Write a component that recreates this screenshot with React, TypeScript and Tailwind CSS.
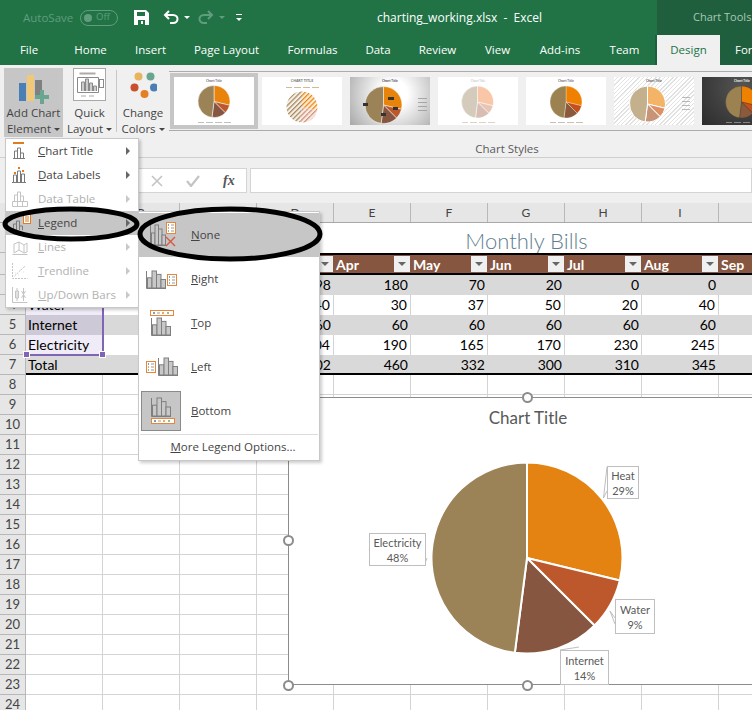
import type { ReactNode } from "react";

const uiFont = "font-['Open_Sans','Noto_Sans',sans-serif]";
const cellFont = "font-['Lato','Liberation_Sans',sans-serif]";

const tabs = [
  { name: "File", cls: "w-[58px]" },
  { name: "Home", cls: "w-[65px]" },
  { name: "Insert", cls: "w-[55px]" },
  { name: "Page Layout", cls: "w-[97px]" },
  { name: "Formulas", cls: "w-[75px]" },
  { name: "Data", cls: "w-[56px]" },
  { name: "Review", cls: "w-[63px]" },
  { name: "View", cls: "w-[57px]" },
  { name: "Add-ins", cls: "w-[68px]" },
  { name: "Team", cls: "w-[61px]" },
];

const columns = ["A", "B", "C", "D", "E", "F", "G", "H", "I", "J"];

const tableRows = [
  { n: 3, label: "Heat", vals: ["98", "180", "70", "20", "0", "0"], shaded: true },
  { n: 4, label: "Water", vals: ["40", "30", "37", "50", "20", "40"], shaded: false },
  { n: 5, label: "Internet", vals: ["60", "60", "60", "60", "60", "60"], shaded: true },
  { n: 6, label: "Electricity", vals: ["304", "190", "165", "170", "230", "245"], shaded: false },
  { n: 7, label: "Total", vals: ["502", "460", "332", "300", "310", "345"], shaded: true },
];

const months = ["", "Apr", "May", "Jun", "Jul", "Aug", "Sep"];
const emptyRows = [8, 9, 10, 11, 12, 13, 14, 15, 16, 17, 18, 19, 20, 21, 22, 23, 24];

// slice boundaries in degrees, clockwise from the top
const pieAngles = [0, 103.6, 135, 187.3, 360];

function slicePath(cx: number, cy: number, r: number, from: number, to: number) {
  const a = ((from - 90) * Math.PI) / 180;
  const b = ((to - 90) * Math.PI) / 180;
  const large = to - from > 180 ? 1 : 0;
  const x1 = cx + r * Math.cos(a);
  const y1 = cy + r * Math.sin(a);
  const x2 = cx + r * Math.cos(b);
  const y2 = cy + r * Math.sin(b);
  return `M${cx} ${cy}L${x1.toFixed(2)} ${y1.toFixed(2)}A${r} ${r} 0 ${large} 1 ${x2.toFixed(2)} ${y2.toFixed(2)}Z`;
}

function Pie(props: { cx: number; cy: number; r: number; colors: string[]; gap?: number; stroke?: string }) {
  const { cx, cy, r, colors, gap = 1, stroke = "#ffffff" } = props;
  return (
    <>
      {colors.map((c, i) => (
        <path
          key={i}
          d={slicePath(cx, cy, r, pieAngles[i], pieAngles[i + 1])}
          fill={c}
          stroke={stroke}
          strokeWidth={gap}
        />
      ))}
    </>
  );
}

function Thumb({ cls, children }: { cls: string; children: ReactNode }) {
  return (
    <svg viewBox="0 0 80 48" className={`h-[48px] w-[80px] flex-none ${cls}`}>
      {children}
    </svg>
  );
}

function ThumbLegend({ y = 45, fill = "#b0b0b0" }: { y?: number; fill?: string }) {
  return (
    <g fill={fill}>
      <rect x="24" y={y} width="6" height="0.8" />
      <rect x="32" y={y} width="7" height="0.8" />
      <rect x="41" y={y} width="7" height="0.8" />
      <rect x="50" y={y} width="7" height="0.8" />
    </g>
  );
}

function Gallery() {
  const base = ["#e8830c", "#bd582c", "#865640", "#9b8357"];
  return (
    <div className="flex h-[60px] w-[676px] items-center border-y border-[#ababab] pl-[1px]">
      <div className="flex-none bg-[#c6c6c6] p-[4px]">
        <Thumb cls="bg-white">
          <text x="40" y="5" fontSize="3" fontWeight="bold" fill="#777" textAnchor="middle">Chart Title</text>
          <Pie cx={40} cy={24.5} r={16} colors={base} gap={0.5} />
          <ThumbLegend />
        </Thumb>
      </div>
      <Thumb cls="ml-[4px] bg-white">
        <defs>
          <pattern id="hatch" width="3.4" height="3.4" patternUnits="userSpaceOnUse" patternTransform="rotate(-45)">
            <rect width="3.4" height="3.4" fill="#f6efe4" />
            <rect width="3.4" height="1.2" fill="#a2825a" />
          </pattern>
          <pattern id="hatch2" width="3.4" height="3.4" patternUnits="userSpaceOnUse" patternTransform="rotate(-45)">
            <rect width="3.4" height="3.4" fill="#fcecd8" />
            <rect width="3.4" height="1.2" fill="#e8830c" />
          </pattern>
          <pattern id="hatch3" width="3.4" height="3.4" patternUnits="userSpaceOnUse" patternTransform="rotate(-45)">
            <rect width="3.4" height="3.4" fill="#f8ebe4" />
            <rect width="3.4" height="1.2" fill="#d08a70" />
          </pattern>
        </defs>
        <text x="40" y="5" fontSize="3.6" fontWeight="bold" fill="#777" textAnchor="middle">CHART TITLE</text>
        <ThumbLegend y={10} fill="#c9a880" />
        <Pie cx={40} cy={30} r={15.5} colors={["url(#hatch2)", "url(#hatch3)", "url(#hatch3)", "url(#hatch)"]} gap={0} />
      </Thumb>
      <Thumb cls="ml-[8px] bg-[radial-gradient(circle_at_55%_35%,#ffffff_25%,#a8a8a8_100%)]">
        <text x="40" y="5" fontSize="3" fontWeight="bold" fill="#555" textAnchor="middle">Chart Title</text>
        <Pie cx={33.5} cy={28} r={18.5} colors={base} gap={0.5} />
        <g fill="#333">
          <rect x="38" y="20" width="6" height="3" />
          <rect x="43" y="30" width="5" height="3" />
          <rect x="31" y="36" width="5" height="3" />
          <rect x="13" y="26" width="5" height="3" />
        </g>
        <g fill="#999">
          <rect x="68" y="21" width="9" height="0.8" />
          <rect x="68" y="25" width="9" height="0.8" />
          <rect x="68" y="29" width="9" height="0.8" />
          <rect x="68" y="33" width="9" height="0.8" />
        </g>
      </Thumb>
      <Thumb cls="ml-[8px] bg-white">
        <text x="40" y="5" fontSize="3" fill="#aaa" textAnchor="middle">Chart Title</text>
        <Pie cx={39.5} cy={25} r={16} colors={["#f9c6a8", "#e8c5b2", "#d8beb2", "#d4cbbc"]} gap={0.5} />
        <ThumbLegend fill="#d8c8b8" />
      </Thumb>
      <Thumb cls="ml-[8px] bg-white">
        <text x="40" y="5" fontSize="3" fontWeight="bold" fill="#777" textAnchor="middle">Chart Title</text>
        <Pie cx={40} cy={25} r={16} colors={["#f08000", "#c4501b", "#8b5a3c", "#9b8250"]} gap={0.3} />
        <ThumbLegend fill="#c0b0a0" />
      </Thumb>
      <Thumb cls="ml-[8px] bg-[repeating-linear-gradient(-45deg,#e2e2e2_0px,#e2e2e2_1px,#ffffff_1px,#ffffff_3px)]">
        <text x="40" y="5" fontSize="3" fontWeight="bold" fill="#666" textAnchor="middle">Chart Title</text>
        <Pie cx={33.5} cy={27} r={18} colors={["#f3b468", "#dd9063", "#c89478", "#c4b08c"]} gap={1} />
        <g fill="#aaa">
          <rect x="68" y="20" width="8" height="0.8" />
          <rect x="68" y="24" width="8" height="0.8" />
          <rect x="68" y="28" width="8" height="0.8" />
          <rect x="68" y="32" width="8" height="0.8" />
        </g>
      </Thumb>
      <Thumb cls="ml-[8px] bg-[radial-gradient(circle_at_50%_20%,#555555,#2c2c2c)]">
        <text x="40" y="5" fontSize="3" fontWeight="bold" fill="#eee" textAnchor="middle">Chart Title</text>
        <Pie cx={39.5} cy={25} r={16} colors={["#f08000", "#c4501b", "#8b5a3c", "#9b8250"]} gap={0.3} stroke="#333" />
        <ThumbLegend fill="#999" />
      </Thumb>
    </div>
  );
}

function Caret({ cls = "ml-[3px] border-t-[#444444]" }: { cls?: string }) {
  return (
    <span className={`inline-block h-0 w-0 border-x-[3px] border-t-[3px] border-x-transparent align-middle ${cls}`} />
  );
}

function TitleBar() {
  return (
    <div className={`flex h-[35px] items-center bg-[#217346] ${uiFont}`}>
      <div className="flex w-[377px] flex-none items-center">
        <span className="ml-[23px] w-[50px] flex-none text-[11.5px] whitespace-nowrap text-[#5f9d7c]">AutoSave</span>
        <span className="ml-[7px] flex h-[16px] w-[38px] flex-none items-center rounded-full border border-[#5f9d7c] pl-[3px] text-[9.5px] text-[#5f9d7c]">
          <span className="h-[8px] w-[8px] rounded-full bg-[#5f9d7c]" />
          <span className="ml-[4px]">Off</span>
        </span>
        <svg viewBox="0 0 15 15" className="ml-[16px] h-[15px] w-[15px]">
          <path d="M0 0h12l3 3v12H0z" fill="#fff" />
          <path d="M3 2h8v4H3zM4 10h7v5H4z" fill="#217346" />
          <path d="M7 11h2v3H7z" fill="#fff" />
        </svg>
        <svg viewBox="0 0 16 15" className="ml-[14px] h-[15px] w-[16px]" fill="none" stroke="#fff" strokeWidth="2">
          <path d="M6 1L2 5l4 4" />
          <path d="M2 5h8c6 0 6 8 0 8H7" />
        </svg>
        <Caret cls="ml-[5px] border-t-white" />
        <svg viewBox="0 0 16 15" className="ml-[8px] h-[15px] w-[16px]" fill="none" stroke="#5f9d7c" strokeWidth="2">
          <path d="M10 1l4 4-4 4" />
          <path d="M14 5H6c-6 0-6 8 0 8h3" />
        </svg>
        <Caret cls="ml-[5px] border-t-[#5f9d7c]" />
        <span className="ml-[11px] flex flex-col items-center gap-[3px]">
          <span className="h-[1px] w-[6px] bg-white" />
          <span className="h-0 w-0 border-x-[3px] border-t-[3px] border-x-transparent border-t-white" />
        </span>
      </div>
      <span className="w-[280px] flex-none text-[12px] whitespace-pre text-white">charting_working.xlsx  -  Excel</span>
      <div className="flex h-[35px] flex-1 items-center bg-[#1f5f3d] pl-[36px] text-[11px] whitespace-nowrap text-[#a9c8b6]">
        Chart Tools
      </div>
    </div>
  );
}

function TabRow() {
  return (
    <div className={`flex h-[30px] items-center bg-[#217346] text-[11.5px] text-white ${uiFont}`}>
      {tabs.map((t) => (
        <span key={t.name} className={`${t.cls} flex-none text-center`}>{t.name}</span>
      ))}
      <div className="flex h-[30px] flex-1 items-center overflow-hidden bg-[#1f5f3d] pl-[2px]">
        <span className="flex h-[30px] w-[63px] flex-none items-center justify-center bg-[#f0f0f0] text-[#217346]">Design</span>
        <span className="ml-[15px]">For</span>
      </div>
    </div>
  );
}

function RibbonButton({ icon, one, two, cls }: { icon: ReactNode; one: string; two: string; cls: string }) {
  return (
    <div className={`flex h-[69px] flex-none flex-col items-center text-[11.5px] leading-[16px] text-[#444] ${cls}`}>
      <div className="h-[38px]">{icon}</div>
      <span className="whitespace-nowrap">{one}</span>
      <span className="whitespace-nowrap">{two}<Caret /></span>
    </div>
  );
}

function Ribbon() {
  return (
    <div className={`flex h-[93px] overflow-hidden border-b border-[#cfcfcf] bg-[#f0f0f0] pt-[3px] pl-[4px] ${uiFont}`}>
      <RibbonButton
        cls="w-[59px] bg-[#c6c6c6]"
        one="Add Chart"
        two="Element"
        icon={
          <svg viewBox="0 0 30 30" className="mt-[6px] h-[30px] w-[30px]">
            <rect x="0" y="9" width="7" height="18" fill="#4a7fb5" />
            <rect x="8" y="1" width="7" height="26" fill="#f0c878" />
            <rect x="16" y="6" width="7" height="16" fill="#808080" />
            <path d="M21 16h4v5h5v4h-5v5h-4v-5h-5v-4h5z" fill="#6aa58f" />
          </svg>
        }
      />
      <RibbonButton
        cls="w-[53px]"
        one="Quick"
        two="Layout"
        icon={
          <svg viewBox="0 0 33 33" className="h-[33px] w-[33px]" fill="none" stroke="#8a8a8a">
            <rect x="0.5" y="0.5" width="32" height="32" fill="#fff" stroke="#a8a8a8" />
            <path d="M6.5 5.5h16" stroke="#aaa" strokeWidth="2" />
            <path d="M4.5 9.5h21v15h-21z" />
            <path d="M8.5 23V14h3v9M12.5 23V11h3v12M16.5 23V15h3v8M20.5 23V18h3v5" fill="#ccc" />
            <path d="M8 28h5M16 28h5" stroke="#aaa" />
            <rect x="26.5" y="11.5" width="4" height="8" />
          </svg>
        }
      />
      <div className="mt-[2px] h-[62px] w-px flex-none bg-[#c8c8c8]" />
      <RibbonButton
        cls="w-[52px]"
        one="Change"
        two="Colors"
        icon={
          <svg viewBox="0 0 28 26" className="mt-[4px] h-[26px] w-[28px]">
            <circle cx="9.5" cy="4.5" r="4" fill="#e8b45e" />
            <circle cx="21.5" cy="4.5" r="4" fill="#6aa58f" />
            <circle cx="5.5" cy="15.5" r="4" fill="#c8502f" />
            <circle cx="25" cy="15.5" r="4" fill="#4a7fb5" />
            <circle cx="15.5" cy="22" r="4" fill="#e67e22" />
          </svg>
        }
      />
      <div className="mt-[3px] flex w-[676px] flex-none flex-col items-center">
        <Gallery />
        <span className="mt-[10px] text-[11.5px] leading-[16px] text-[#5a5a5a]">Chart Styles</span>
      </div>
    </div>
  );
}

function FormulaBar() {
  return (
    <div className="flex h-[45px] items-start bg-[#efefef] pt-[10px] pl-[138px]">
      <div className="flex h-[25px] w-[109px] flex-none items-center border border-[#d4d4d4] bg-white pl-[12px]">
        <svg viewBox="0 0 12 12" className="h-[12px] w-[12px]" stroke="#c4c4c4" strokeWidth="1.6">
          <path d="M1 1l10 10M11 1L1 11" />
        </svg>
        <svg viewBox="0 0 14 12" className="ml-[23px] h-[12px] w-[14px]" fill="none" stroke="#c4c4c4" strokeWidth="2.2">
          <path d="M1 6l4 5 8-10" />
        </svg>
        <span className="ml-[23px] font-['Liberation_Serif',serif] text-[14px] font-bold italic text-[#555]">fx</span>
      </div>
      <div className="ml-[3px] h-[25px] flex-1 border border-[#d4d4d4] bg-white" />
    </div>
  );
}

function ColumnHeaders() {
  return (
    <div className={`flex h-[20px] border-b border-[#a8a8a8] bg-[#e6e6e6] text-[12px] text-[#444] ${cellFont}`}>
      <div className="w-[26px] flex-none border-r border-[#b8b8b8]" />
      {columns.map((c) => (
        <div key={c} className="flex w-[77px] flex-none items-center justify-center border-r border-[#b8b8b8]">{c}</div>
      ))}
    </div>
  );
}

function RowHead({ n, cls = "h-[20px]" }: { n: number; cls?: string }) {
  return (
    <div className={`flex w-[26px] flex-none items-center justify-center border-r border-b border-[#b8b8b8] bg-[#e6e6e6] text-[13px] leading-none text-[#444] ${cls}`}>
      {n}
    </div>
  );
}

function Sheet() {
  return (
    <div className={`w-[1200px] bg-white ${cellFont}`}>
      <ColumnHeaders />
      <div className="flex h-[30px]">
        <RowHead n={1} cls="h-[30px]" />
        <div className="flex w-[1001px] flex-none items-center justify-center pt-[5px] text-[22px] leading-none font-light text-[#5f7f90]">
          Monthly Bills
        </div>
      </div>
      <div className="flex h-[22px]">
        <RowHead n={2} cls="h-[22px]" />
        <div className="flex h-[22px] flex-1 border-y-2 border-black bg-[#865640] text-[14px] font-bold text-white">
          <div className="w-[231px] flex-none" />
          {months.map((m, i) => (
            <div key={i} className="flex w-[77px] flex-none items-center justify-between pr-px pl-[2px]">
              <span>{m}</span>
              {i < 6 && (
                <span className="flex h-[16px] w-[16px] items-center justify-center bg-[#f0f0f0]">
                  <span className="h-0 w-0 border-x-[4px] border-t-[4px] border-x-transparent border-t-[#666]" />
                </span>
              )}
            </div>
          ))}
        </div>
      </div>
      {tableRows.map((r) => (
        <div key={r.n} className="flex h-[20px]">
          <RowHead n={r.n} />
          <div
            className={`flex flex-1 text-[14px] leading-[19px] text-black ${r.shaded ? "bg-[#d9d9d9]" : "bg-white"} ${r.n === 7 ? "h-[20px] border-b-2 border-black" : ""}`}
          >
            <div
              className={`w-[77px] flex-none pl-[2px] ${r.n >= 4 && r.n <= 6 ? (r.shaded ? "bg-[#cdc9d6]" : "bg-[#efebf7]") : ""}`}
            >
              {r.label}
            </div>
            <div className={`w-[77px] flex-none ${r.shaded ? "" : "border-r border-[#d4d4d4]"}`} />
            <div className={`w-[77px] flex-none ${r.shaded ? "" : "border-r border-[#d4d4d4]"}`} />
            {r.vals.map((v, i) => (
              <div key={i} className={`w-[77px] flex-none pr-[3px] text-right ${r.shaded ? "" : "border-r border-[#d4d4d4]"}`}>
                {v}
              </div>
            ))}
          </div>
        </div>
      ))}
      {emptyRows.map((n) => (
        <div key={n} className="flex h-[20px]">
          <RowHead n={n} />
          {columns.map((c) => (
            <div key={c} className="w-[77px] flex-none border-r border-b border-[#d4d4d4]" />
          ))}
        </div>
      ))}
    </div>
  );
}

function Arrow({ cls }: { cls: string }) {
  return <span className={`h-0 w-0 border-y-[4px] border-l-[4px] border-y-transparent ${cls}`} />;
}

function MenuIcon({ kind, dim }: { kind: string; dim: boolean }) {
  const s = dim ? "#c4c4c4" : "#7a7a7a";
  return (
    <svg viewBox="0 0 20 18" className="h-[18px] w-[20px] flex-none" fill="none" stroke={s}>
      {kind === "title" && (
        <>
          <path d="M1 1h11" stroke="#e07b20" strokeWidth="2" />
          <path d="M2.5 16V9h3v7M5.5 16V6h3v10M8.5 16v-5h3v5M1 16.5h12" />
        </>
      )}
      {kind === "labels" && (
        <>
          <path d="M2 7h2M6 2h2M10 5h2" stroke="#e07b20" strokeWidth="2" />
          <path d="M1.5 16V9h3v7M5.5 16V5h3v11M9.5 16V8h3v8M0 16.5h14" />
        </>
      )}
      {kind === "table" && (
        <path d="M2.5 11V5h3v6M5.5 11V2h3v9M8.5 11V6h3v5M0.5 11.5h15v5h-15zM5.5 11.5v5M10.5 11.5v5" />
      )}
      {kind === "legend" && (
        <>
          <path d="M1.5 16V10h3v6M4.5 16V7h3v9M7.5 16v-4h3v4" />
          <rect x="11.5" y="0.5" width="7" height="9" fill="#fff" stroke="#e07b20" />
          <path d="M13 3h4M13 5h4M13 7h4" stroke="#e07b20" />
        </>
      )}
      {kind === "lines" && <path d="M0.5 16.5h15M2 6v9l5-3V4zM7 4l5 3v8l-5-3M12 7l3-2v9l-3 1" />}
      {kind === "trend" && (
        <path d="M0.5 1v15.5h15M2.5 14L13 4M3 11h.5M6 13h.5M8 8h.5M11 10h.5M12 5h.5" strokeDasharray="2 1" />
      )}
      {kind === "updown" && (
        <path d="M0.5 1v15.5h15M3.5 5h3v7h-3zM5 2v13M9.5 5l4 7M13.5 5l-4 7M11.5 2v13" />
      )}
    </svg>
  );
}

function ChartElementMenu() {
  const items = [
    { kind: "title", first: "C", rest: "hart Title", dim: false },
    { kind: "labels", first: "D", rest: "ata Labels", dim: false },
    { kind: "table", first: "", rest: "Data Table", dim: true },
    { kind: "legend", first: "L", rest: "egend", dim: false, hover: true },
    { kind: "lines", first: "L", rest: "ines", dim: true },
    { kind: "trend", first: "T", rest: "rendline", dim: true },
    { kind: "updown", first: "U", rest: "p/Down Bars", dim: true },
  ];
  return (
    <div className={`absolute top-[138px] left-[5px] w-[134px] border border-[#c8c8c8] bg-white shadow-[2px_2px_3px_rgba(0,0,0,0.2)] ${uiFont}`}>
      {items.map((it) => (
        <div
          key={it.kind}
          className={`flex h-[24px] items-center pl-[6px] text-[11.5px] ${it.dim ? "text-[#b1b1b1]" : "text-[#444]"} ${it.hover ? "bg-[#c6c6c6]" : ""}`}
        >
          <MenuIcon kind={it.kind} dim={it.dim} />
          <span className="ml-[6px] w-[88px] flex-none whitespace-nowrap">
            {it.first ? <u>{it.first}</u> : null}
            {it.rest}
          </span>
          <Arrow cls={it.dim ? "border-l-[#c8c8c8]" : "border-l-[#666]"} />
        </div>
      ))}
    </div>
  );
}

function MiniBars({ x, y, w = 20, h = 17 }: { x: number; y: number; w?: number; h?: number }) {
  const bw = (w - 2) / 4;
  const hs = [0.6, 1, 0.8, 0.5];
  return (
    <g fill="#c8c8c8" stroke="#7f7f7f">
      <path d={`M${x + 0.5} ${y - h}V${y + 0.5}H${x + w}`} fill="none" />
      {hs.map((f, i) => (
        <rect key={i} x={x + 1.5 + i * bw} y={y - h * f} width={bw} height={h * f} />
      ))}
    </g>
  );
}

function LegendBar({ x, y, w = 23 }: { x: number; y: number; w?: number }) {
  return (
    <g>
      <rect x={x + 0.5} y={y + 0.5} width={w} height={5} fill="#fff" stroke="#e5873a" />
      <path d={`M${x + 3} ${y + 3}h2`} stroke="#4a7fb5" strokeWidth="1.5" />
      <path d={`M${x + 7} ${y + 3}h3`} stroke="#999" />
      <path d={`M${x + 12} ${y + 3}h2`} stroke="#e5873a" strokeWidth="1.5" />
      <path d={`M${x + 17} ${y + 3}h2`} stroke="#6aa58f" strokeWidth="1.5" />
    </g>
  );
}

function LegendList({ x, y, w = 9, h = 11 }: { x: number; y: number; w?: number; h?: number }) {
  return (
    <g>
      <rect x={x + 0.5} y={y + 0.5} width={w} height={h} fill="#fff" stroke="#e5873a" />
      <path d={`M${x + 2} ${y + 3}h1`} stroke="#4a7fb5" strokeWidth="1.5" />
      <path d={`M${x + 2} ${y + 6}h1`} stroke="#e5873a" strokeWidth="1.5" />
      <path d={`M${x + 2} ${y + 9}h1`} stroke="#6aa58f" strokeWidth="1.5" />
      <path d={`M${x + 5} ${y + 3}h3M${x + 5} ${y + 6}h3M${x + 5} ${y + 9}h3`} stroke="#999" />
    </g>
  );
}

function LegendOption({ label, rest, hover, selected, children }: { label: string; rest: string; hover?: boolean; selected?: boolean; children: ReactNode }) {
  return (
    <div className={`flex h-[44px] items-center pl-[2px] text-[11.5px] text-[#444] ${hover ? "bg-[#c6c6c6]" : ""}`}>
      <div className={`flex h-[40px] w-[40px] flex-none ${selected ? "border border-[#8a8a8a] bg-[#c6c6c6]" : ""}`}>
        <svg viewBox="0 0 40 40" className="h-[40px] w-[40px] flex-none">{children}</svg>
      </div>
      <span className="ml-[10px]"><u>{label}</u>{rest}</span>
    </div>
  );
}

function LegendMenu() {
  return (
    <div className={`absolute top-[211px] left-[138px] h-[250px] w-[182px] border border-[#c8c8c8] bg-white pt-[1px] shadow-[2px_2px_3px_rgba(0,0,0,0.2)] ${uiFont}`}>
      <LegendOption label="N" rest="one" hover>
        <MiniBars x={9} y={30} w={16} h={20} />
        <LegendList x={25} y={7} />
        <path d="M25 22l9 9M34 22l-9 9" stroke="#d9573f" strokeWidth="1.4" />
      </LegendOption>
      <LegendOption label="R" rest="ight">
        <MiniBars x={5} y={29} />
        <LegendList x={26} y={15} />
      </LegendOption>
      <LegendOption label="T" rest="op">
        <LegendBar x={9} y={7} />
        <MiniBars x={10} y={32} />
      </LegendOption>
      <LegendOption label="L" rest="eft">
        <LegendList x={5} y={14} />
        <MiniBars x={17} y={28} />
      </LegendOption>
      <LegendOption label="B" rest="ottom" selected>
        <MiniBars x={9} y={24} h={18} />
        <LegendBar x={9} y={26} />
      </LegendOption>
      <div className="mx-[1px] mt-[1px] flex h-[25px] items-center justify-center border-t border-[#dcdcdc] pl-[8px] text-[11.5px] text-[#444]">
        <span><u>M</u>ore Legend Options...</span>
      </div>
    </div>
  );
}

function Callout({ cls, one, two }: { cls: string; one: string; two: string }) {
  return (
    <div className={`absolute flex flex-col items-center justify-center border border-[#bfbfbf] bg-white text-[11px] leading-[15px] text-[#595959] ${cls}`}>
      <span>{one}</span>
      <span>{two}</span>
    </div>
  );
}

function Handle({ cls }: { cls: string }) {
  return <span className={`absolute h-[11px] w-[11px] rounded-full border-2 border-[#8c8c8c] bg-white ${cls}`} />;
}

function ChartObject() {
  return (
    <div className={`absolute top-[397px] left-[288px] h-[288px] w-[500px] border border-[#8c8c8c] bg-white ${cellFont}`}>
      <div className="w-[400px] pt-[9px] pl-[78px] text-center text-[17px] leading-[22px] text-[#595959]">Chart Title</div>
      <svg viewBox="0 0 500 288" className="absolute top-[-1px] left-[-1px] h-[288px] w-[500px]">
        <Pie cx={239} cy={161} r={95.5} colors={["#e48312", "#bd582c", "#865640", "#9b8357"]} gap={2} />
        <path d="M319 70l-3.5 31 3.5-7" fill="#fff" stroke="#bfbfbf" />
        <path d="M327 221l-5-7 5 13" fill="#fff" stroke="#bfbfbf" />
        <path d="M272 253l19-3" fill="none" stroke="#bfbfbf" />
        <path d="M137 151l-1 8 1 7 2-5" fill="#fff" stroke="#bfbfbf" />
      </svg>
      <Callout cls="top-[68px] left-[318px] h-[33px] w-[32px]" one="Heat" two="29%" />
      <Callout cls="top-[201px] left-[326px] h-[35px] w-[40px]" one="Water" two="9%" />
      <Callout cls="top-[252px] left-[271px] h-[35px] w-[49px]" one="Internet" two="14%" />
      <Callout cls="top-[135px] left-[80px] h-[33px] w-[57px]" one="Electricity" two="48%" />
      <Handle cls="top-[-6px] left-[233px]" />
      <Handle cls="top-[137px] left-[-6px]" />
      <Handle cls="top-[282px] left-[-6px]" />
      <Handle cls="top-[282px] left-[233px]" />
    </div>
  );
}

function Selection() {
  return (
    <div className="absolute top-[275px] left-[26px] h-[81px] w-[78px] border-r-2 border-b-2 border-[#8064b5]">
      <span className="absolute right-[-4px] bottom-[-4px] h-[7px] w-[7px] border border-white bg-[#8064b5]" />
      <span className="absolute bottom-[-4px] left-[-3px] h-[7px] w-[7px] border border-white bg-[#8064b5]" />
    </div>
  );
}

export default function App() {
  return (
    <div className="relative h-[710px] w-[752px] overflow-hidden bg-white">
      <TitleBar />
      <TabRow />
      <Ribbon />
      <FormulaBar />
      <Sheet />
      <Selection />
      <ChartObject />
      <ChartElementMenu />
      <LegendMenu />
      <svg viewBox="0 0 752 710" className="pointer-events-none absolute top-0 left-0 h-[710px] w-[752px]" fill="none" stroke="#000" strokeWidth="5">
        <ellipse cx="71" cy="224" rx="66" ry="15" />
        <ellipse cx="230" cy="234" rx="90" ry="25" />
      </svg>
    </div>
  );
}
